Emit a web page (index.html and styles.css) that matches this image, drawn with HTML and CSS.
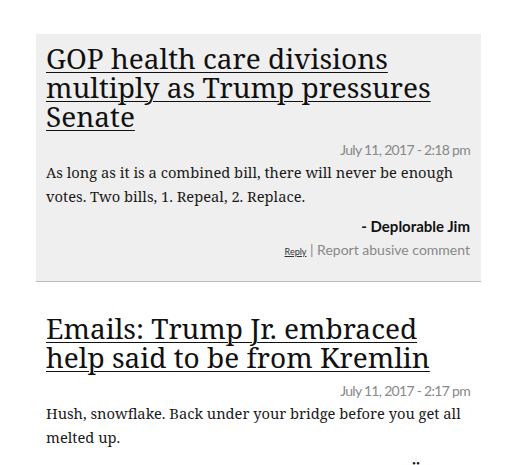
FILE: index.html
```html
<!DOCTYPE html>
<html>
<head>
<meta charset="utf-8">
<link rel="stylesheet" href="styles.css">
</head>
<body>
<div class="list">
  <div class="comment shaded">
    <h2 class="title"><a href="#">GOP health care divisions multiply as Trump pressures Senate</a></h2>
    <div class="date">July 11, 2017 - 2:18 pm</div>
    <p class="body">As long as it is a combined bill, there will never be enough votes. Two bills, 1. Repeal, 2. Replace.</p>
    <div class="author">- Deplorable Jim</div>
    <div class="links"><a class="reply" href="#">Reply</a> | Report abusive comment</div>
  </div>
  <div class="comment second">
    <h2 class="title"><a href="#">Emails: Trump Jr. embraced help said to be from Kremlin</a></h2>
    <div class="date">July 11, 2017 - 2:17 pm</div>
    <p class="body">Hush, snowflake. Back under your bridge before you get all melted up.</p>
    <div class="author cut">&#8229;</div>
  </div>
</div>
</body>
</html>
```
FILE: styles.css
```css
html, body {
  margin: 0;
  padding: 0;
  background: #fff;
}
.list {
  padding: 34px 24px 0 36px;
}
.comment {
  padding: 10px 11px 20px 10px;
}
.second {
  padding-top: 32px;
}
.shaded {
  background: #efefef;
  border-bottom: 1px solid #bbb;
}
.title {
  margin: 0;
  font-family: "Noto Serif", "DejaVu Serif", serif;
  font-weight: normal;
  font-size: 28px;
  line-height: 29px;
}
.title a {
  color: #111;
  text-decoration: underline;
  text-decoration-thickness: 1px;
  text-underline-offset: 3px;
}
.date {
  text-align: right;
  font-family: Lato, sans-serif;
  font-size: 14px;
  letter-spacing: -0.7px;
  color: #888;
  margin-top: 10px;
  line-height: 18px;
}
.body {
  margin: 1px 0 0;
  font-family: "Noto Serif", "DejaVu Serif", serif;
  font-size: 14.7px;
  line-height: 24px;
  color: #1a1a1a;
}
.author {
  text-align: right;
  font-family: Lato, sans-serif;
  font-weight: bold;
  font-size: 15px;
  color: #111;
  margin-top: 8px;
  line-height: 20px;
}
.links {
  text-align: right;
  font-family: Lato, sans-serif;
  font-size: 14px;
  color: #888;
  margin-top: 5px;
  line-height: 18px;
}
.reply {
  font-size: 9px;
  color: #333;
  text-decoration: underline;
}
.cut {
  margin-top: 2px;
  margin-right: 50px;
  line-height: 14px;
}
```
